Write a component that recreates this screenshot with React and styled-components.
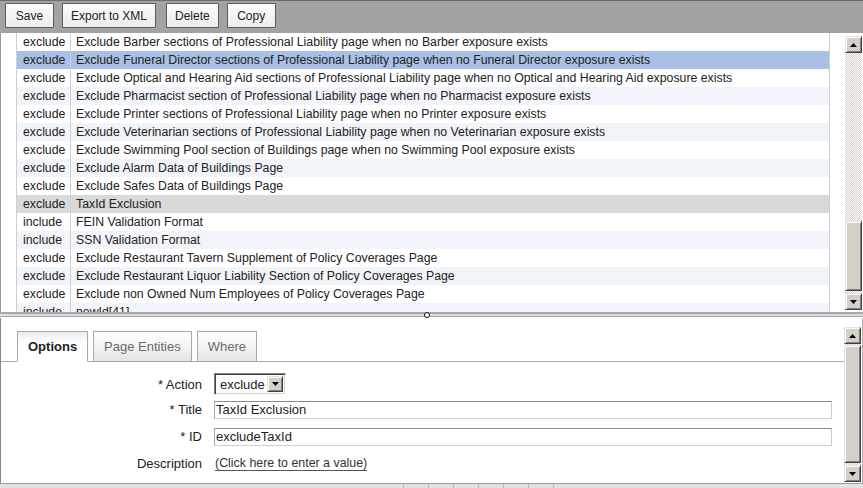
import React from 'react';
import styled, { createGlobalStyle } from 'styled-components';

const GlobalStyle = createGlobalStyle`
  html, body {
    margin: 0;
    padding: 0;
    background: #fff;
    overflow: hidden;
  }
  body {
    font-family: "Liberation Sans", Arial, sans-serif;
    font-size: 12px;
    color: #222;
  }
`;

const Page = styled.div`
  width: 863px;
  height: 488px;
  display: flex;
  flex-direction: column;
  overflow: hidden;
`;

const Toolbar = styled.div`
  height: 33px;
  box-sizing: border-box;
  background: #a2a2a2;
  border-top: 1px solid #6a6a6a;
  display: flex;
  align-items: flex-start;
  gap: 8px;
  padding: 2px 0 0 5px;
`;

const ToolButton = styled.button`
  height: 25px;
  min-width: 49px;
  padding: 0 8px;
  margin-right: ${(p) => p.$extra || 0}px;
  font-family: inherit;
  font-size: 12px;
  color: #222;
  background: linear-gradient(#fbfbfb, #ececec);
  border: 1px solid #5c5c5c;
  border-radius: 1px;
  cursor: pointer;
`;

const ListPanel = styled.div`
  height: 279px;
  display: flex;
  border-left: 1px solid #9a9a9a;
`;

const ListArea = styled.div`
  flex: 1;
  padding: 0 15px 0 15px;
  overflow: hidden;
`;

const Table = styled.div`
  border-left: 1px solid #d0d0d0;
  border-right: 1px solid #d0d0d0;
  font-size: 12.3px;
`;

const rowBg = (p) => {
  if (p.$selected) return '#a9bfe6';
  if (p.$current) return '#d9d9d9';
  return p.$odd ? '#f1f4f9' : '#fff';
};

const Row = styled.div`
  display: flex;
  height: 18px;
  line-height: 18px;
  background: ${rowBg};
  white-space: nowrap;
`;

const TypeCell = styled.div`
  width: 47px;
  padding-left: 6px;
  border-right: 1px solid #d0d0d0;
  flex-shrink: 0;
`;

const TitleCell = styled.div`
  padding-left: 5px;
`;

const ScrollBar = styled.div`
  width: 17px;
  margin: ${(p) => p.$top}px 1px ${(p) => p.$bottom}px 0;
  display: flex;
  flex-direction: column;
`;

const ScrollButton = styled.div`
  height: 17px;
  box-sizing: border-box;
  background: #d4d0c8;
  border: 1px solid;
  border-color: #e4e2dc #404040 #404040 #e4e2dc;
  box-shadow: inset 1px 1px #fff, inset -1px -1px #808080;
  display: flex;
  align-items: center;
  justify-content: center;
`;

const Track = styled.div`
  flex: ${(p) => (p.$grow ? 1 : 'none')};
  height: ${(p) => (p.$grow ? 'auto' : `${p.$h}px`)};
  background-color: #fff;
  background-image: repeating-conic-gradient(#d4d0c8 0 25%, #fff 0 50%);
  background-size: 2px 2px;
`;

const Thumb = styled.div`
  height: ${(p) => p.$h}px;
  box-sizing: border-box;
  background: #d4d0c8;
  border: 1px solid;
  border-color: #e4e2dc #404040 #404040 #e4e2dc;
  box-shadow: inset 1px 1px #fff, inset -1px -1px #808080;
`;

const Arrow = ({ down }) => (
  <svg width="7" height="4" viewBox="0 0 7 4">
    <polygon points={down ? '0,0 7,0 3.5,4' : '0,4 7,4 3.5,0'} fill="#000" />
  </svg>
);

const Scroller = ({ top, bottom, thumb, after }) => (
  <ScrollBar $top={top} $bottom={bottom}>
    <ScrollButton><Arrow /></ScrollButton>
    <Track $grow />
    <Thumb $h={thumb} />
    <Track $h={after} />
    <ScrollButton><Arrow down /></ScrollButton>
  </ScrollBar>
);

const Splitter = styled.div`
  height: 6px;
  position: relative;
  background: linear-gradient(
    #a8a8a8 0 2px,
    #dcdcdc 2px 4px,
    #a8a8a8 4px 5px,
    #fff 5px 6px
  );
`;

const Grip = styled.div`
  position: absolute;
  left: 424px;
  top: 0px;
  width: 4px;
  height: 4px;
  border: 1px solid #111;
  border-radius: 50%;
  background: #fff;
`;

const DetailPanel = styled.div`
  height: 165px;
  display: flex;
  border-left: 1px solid #8a8a8a;
  border-right: 1px solid #b0b0b0;
`;

const DetailBody = styled.div`
  flex: 1;
  padding-top: 13px;
  display: flex;
  flex-direction: column;
`;

const TabBar = styled.div`
  display: flex;
  gap: 5px;
  padding-left: 16px;
  border-bottom: 1px solid #a8a8a8;
`;

const Tab = styled.div`
  height: 29px;
  line-height: 30px;
  padding: 0 10px;
  font-size: 13px;
  font-weight: ${(p) => (p.$active ? 'bold' : 'normal')};
  color: ${(p) => (p.$active ? '#222' : '#6a6a6a')};
  background: ${(p) =>
    p.$active
      ? 'linear-gradient(#e9eef5, #fff 40%, #fff)'
      : 'linear-gradient(#fff, #f4f4f4 50%, #e4e4e4)'};
  border: 1px solid #a8a8a8;
  border-bottom: ${(p) => (p.$active ? '1px solid #fff' : 'none')};
  margin-bottom: ${(p) => (p.$active ? '-1px' : '0')};
`;

const Form = styled.div`
  display: grid;
  grid-template-columns: 201px 1fr;
  grid-template-rows: 24px 27px 27px 27px;
  column-gap: 12px;
  align-items: center;
  margin-top: 10px;
  padding-right: 12px;
  font-size: 13px;
`;

const Label = styled.div`
  text-align: right;
`;

const SelectBox = styled.div`
  width: 72px;
  height: 22px;
  box-sizing: border-box;
  display: flex;
  align-items: center;
  border: 1px solid;
  border-color: #808080 #fff #fff #808080;
  box-shadow: inset 1px 1px #404040, inset -1px -1px #d4d0c8;
  padding: 2px;
  background: #fff;
  font-size: 13px;
`;

const SelectText = styled.span`
  flex: 1;
  padding-left: 3px;
`;

const SelectButton = styled(ScrollButton)`
  width: 16px;
  height: 16px;
`;

const Input = styled.input`
  width: 100%;
  height: 18px;
  box-sizing: border-box;
  margin: 0;
  padding: 0 1px;
  font-family: inherit;
  font-size: 13px;
  color: #222;
  border: 1px solid;
  border-color: #8c8c8c #cfcfcf #cfcfcf #a8a8a8;
  outline: none;
  background: #fff;
`;

const ValueLink = styled.span`
  justify-self: start;
  margin-left: 1px;
  font-size: 12.4px;
  color: #333;
  border-bottom: 1px solid #555;
  line-height: 14px;
  cursor: pointer;
`;

const StatusBar = styled.div`
  height: 5px;
  box-sizing: border-box;
  border-top: 1px solid #9a9a9a;
  background: #e2e2e2;
  display: flex;
  padding-left: 403px;
`;

const StatusCell = styled.div`
  width: 24px;
  border-left: 1px solid #b8b8b8;
`;

const rules = [
  ['exclude', 'Exclude Barber sections of Professional Liability page when no Barber exposure exists'],
  ['exclude', 'Exclude Funeral Director sections of Professional Liability page when no Funeral Director exposure exists'],
  ['exclude', 'Exclude Optical and Hearing Aid sections of Professional Liability page when no Optical and Hearing Aid exposure exists'],
  ['exclude', 'Exclude Pharmacist section of Professional Liability page when no Pharmacist exposure exists'],
  ['exclude', 'Exclude Printer sections of Professional Liability page when no Printer exposure exists'],
  ['exclude', 'Exclude Veterinarian sections of Professional Liability page when no Veterinarian exposure exists'],
  ['exclude', 'Exclude Swimming Pool section of Buildings page when no Swimming Pool exposure exists'],
  ['exclude', 'Exclude Alarm Data of Buildings Page'],
  ['exclude', 'Exclude Safes Data of Buildings Page'],
  ['exclude', 'TaxId Exclusion'],
  ['include', 'FEIN Validation Format'],
  ['include', 'SSN Validation Format'],
  ['exclude', 'Exclude Restaurant Tavern Supplement of Policy Coverages Page'],
  ['exclude', 'Exclude Restaurant Liquor Liability Section of Policy Coverages Page'],
  ['exclude', 'Exclude non Owned Num Employees of Policy Coverages Page'],
  ['include', 'newId[41]'],
];

const SELECTED = 1;
const CURRENT = 9;

const App = () => (
  <Page>
    <GlobalStyle />
    <Toolbar>
      <ToolButton>Save</ToolButton>
      <ToolButton $extra={2}>Export to XML</ToolButton>
      <ToolButton>Delete</ToolButton>
      <ToolButton>Copy</ToolButton>
    </Toolbar>

    <ListPanel>
      <ListArea>
        <Table>
          {rules.map(([type, title], i) => (
            <Row key={i} $odd={i % 2 === 1} $selected={i === SELECTED} $current={i === CURRENT}>
              <TypeCell>{type}</TypeCell>
              <TitleCell>{title}</TitleCell>
            </Row>
          ))}
        </Table>
      </ListArea>
      <Scroller top={3} bottom={2} thumb={70} after={2} />
    </ListPanel>

    <Splitter>
      <Grip />
    </Splitter>

    <DetailPanel>
      <DetailBody>
        <TabBar>
          <Tab $active>Options</Tab>
          <Tab>Page Entities</Tab>
          <Tab>Where</Tab>
        </TabBar>
        <Form>
          <Label>* Action</Label>
          <SelectBox>
            <SelectText>exclude</SelectText>
            <SelectButton><Arrow down /></SelectButton>
          </SelectBox>
          <Label>* Title</Label>
          <Input readOnly value="TaxId Exclusion" />
          <Label>* ID</Label>
          <Input readOnly value="excludeTaxId" />
          <Label>Description</Label>
          <ValueLink>(Click here to enter a value)</ValueLink>
        </Form>
      </DetailBody>
      <Scroller top={9} bottom={1} thumb={118} after={2} />
    </DetailPanel>

    <StatusBar>
      {Array.from({ length: 7 }).map((_, i) => (
        <StatusCell key={i} />
      ))}
    </StatusBar>
  </Page>
);

export default App;
